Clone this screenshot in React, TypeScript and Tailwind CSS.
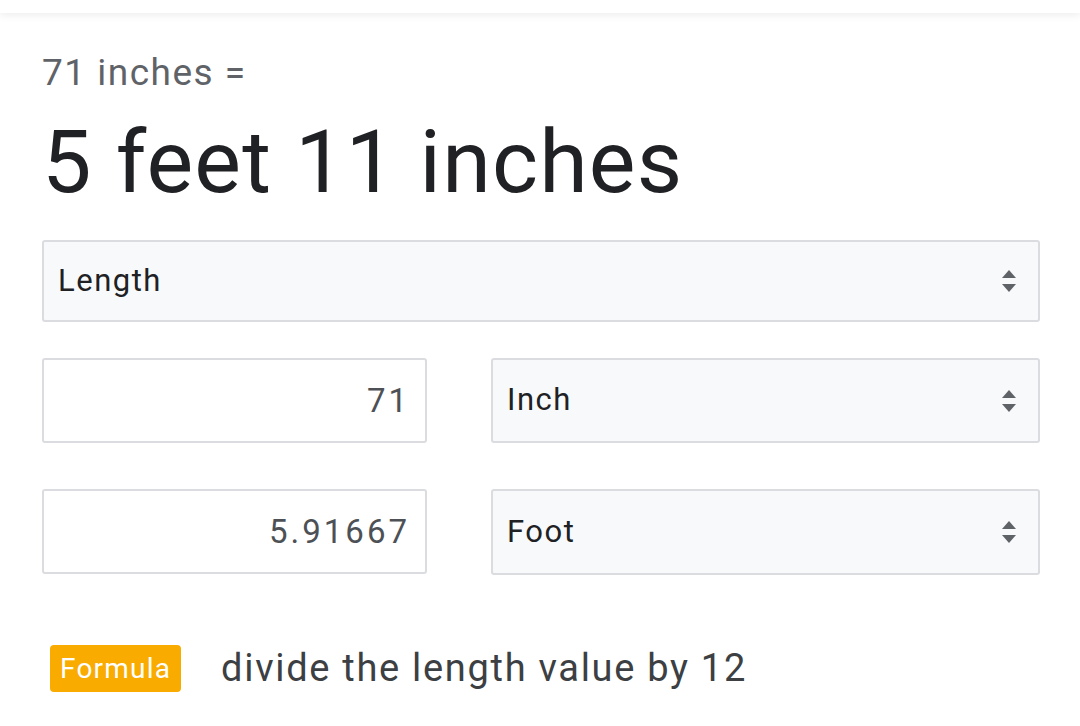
const Arrows = () => (
  <svg width="16" height="28" viewBox="0 0 16 28" className="shrink-0">
    <path d="M8 3 L15 11 H1 Z" fill="#5f6368" />
    <path d="M8 25 L15 17 H1 Z" fill="#5f6368" />
  </svg>
);

const Select = ({ label, className }: { label: string; className: string }) => (
  <div
    className={`flex items-center justify-between bg-[#f8f9fa] border-2 border-[#dadce0] rounded-[3px] pl-[14px] pr-[21px] ${className}`}
  >
    <span className="text-[31px] text-[#202124] tracking-[1.5px]">{label}</span>
    <Arrows />
  </div>
);

const NumberBox = ({ value }: { value: string }) => (
  <div className="w-[385px] h-[85px] shrink-0 flex items-center justify-end bg-white border-2 border-[#dadce0] rounded-[3px] pr-[15px]">
    <span className="text-[33px] text-[#4d5156] tracking-[3px]">{value}</span>
  </div>
);

export default function App() {
  return (
    <div className="w-[1080px] h-[726px] bg-white overflow-hidden font-['Roboto',sans-serif]">
      <div className="h-[13px] bg-white shadow-[0_2px_8px_rgba(0,0,0,0.08)]" />
      <div className="pl-[42px] pr-[40px]">
        <div className="mt-[36px] text-[37px] leading-[48px] text-[#5f6368] tracking-[1.5px]">71 inches =</div>
        <div className="mt-[15px] text-[88px] leading-[100px] text-[#202124] tracking-[1.2px]">5 feet 11 inches</div>
        <Select label="Length" className="mt-[28px] h-[82px] w-[998px]" />
        <div className="mt-[36px] flex gap-[64px]">
          <NumberBox value="71" />
          <Select label="Inch" className="h-[85px] w-[549px] shrink-0" />
        </div>
        <div className="mt-[46px] flex gap-[64px]">
          <NumberBox value="5.91667" />
          <Select label="Foot" className="h-[86px] w-[549px] shrink-0" />
        </div>
        <div className="mt-[65px] flex items-center pl-[8px]">
          <span className="bg-[#f9ab00] text-white text-[28px] leading-[47px] px-[10px] rounded-[4px] tracking-[1.2px]">Formula</span>
          <span className="ml-[40px] text-[38px] text-[#3c4043] tracking-[1.7px]">divide the length value by 12</span>
        </div>
      </div>
    </div>
  );
}
